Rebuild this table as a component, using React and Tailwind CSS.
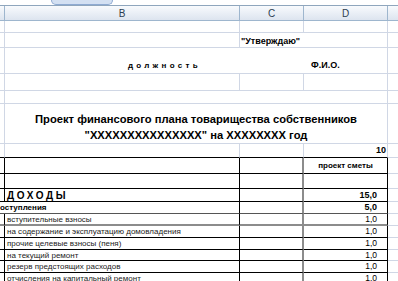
const font = { fontFamily: '"Liberation Sans", Arial, sans-serif' }

const rows = [
  { label: 'вступительные взносы', h: 'h-[12px]', line: 'border-b-2 border-b-[#8c8c8c]' },
  { label: 'на содержание и эксплуатацию домовладения', h: 'h-[12px]', line: 'border-b border-b-black' },
  { label: 'прочие целевые взносы (пеня)', h: 'h-[12px]', line: 'border-b border-b-black' },
  { label: 'на текущий ремонт', h: 'h-[11px]', line: 'border-b border-b-black' },
  { label: 'резерв предстоящих расходов', h: 'h-[12px]', line: 'border-b border-b-black' },
  { label: 'отчисления на капитальный ремонт', h: 'h-[12px]', line: 'border-b-2 border-b-[#8c8c8c]' },
]

function GridRow({ h, children }) {
  return <div className={`flex ${h}`}>{children}</div>
}

export default function App() {
  return (
    <div className="w-[398px] h-[281px] overflow-hidden bg-white text-black" style={font}>
      {/* strip above headers */}
      <div className="h-[5px] flex">
        <div className="ml-[51px] w-[62px] h-[5px] rounded-b-[6px] bg-[#d3e0f2] border border-t-0 border-[#8eaad2]" />
      </div>

      {/* column headers */}
      <div className="flex h-[16px] border-t border-[#8fa6bd] bg-gradient-to-b from-[#f8fafd] to-[#dbe3ee] text-[10px] text-[#2c3e50] leading-[15px]">
        <div className="w-[5px] shrink-0 border-r border-b border-[#9eb6ce]" />
        <div className="w-[235px] shrink-0 border-r border-b border-[#9eb6ce] text-center">B</div>
        <div className="w-[64px] shrink-0 border-r border-b border-[#9eb6ce] text-center">C</div>
        <div className="w-[84px] shrink-0 border-r border-b border-[#9eb6ce] text-center">D</div>
        <div className="flex-1 border-b border-[#9eb6ce]" />
      </div>

      {/* row 1 */}
      <GridRow h="h-[12px]">
        <div className="w-[5px] shrink-0 border-r border-b border-[#d0d7e5]" />
        <div className="w-[235px] shrink-0 border-r border-b border-[#d0d7e5]" />
        <div className="w-[64px] shrink-0 border-r border-b border-[#d0d7e5]" />
        <div className="w-[84px] shrink-0 border-r border-b border-[#d0d7e5]" />
        <div className="flex-1 border-b border-[#d0d7e5]" />
      </GridRow>

      {/* Утверждаю */}
      <GridRow h="h-[15px]">
        <div className="w-[5px] shrink-0 border-r border-b border-[#d0d7e5]" />
        <div className="w-[235px] shrink-0 border-r border-b border-[#d0d7e5]" />
        <div className="w-[148px] shrink-0 border-r border-b border-[#d0d7e5] pl-[1px] text-[9px] font-bold leading-[16px] whitespace-nowrap">
          "Утверждаю"
        </div>
        <div className="flex-1 border-b border-[#d0d7e5]" />
      </GridRow>

      {/* должность / ФИО */}
      <GridRow h="h-[26px]">
        <div className="w-[5px] shrink-0 border-r border-b border-[#d0d7e5]" />
        <div className="w-[235px] shrink-0 border-b border-[#d0d7e5] flex items-end justify-end pr-[39px] pb-[2px] text-[8px] font-bold tracking-[3.3px] leading-[10px] whitespace-nowrap">
          должность
        </div>
        <div className="w-[64px] shrink-0 border-b border-[#d0d7e5]" />
        <div className="w-[84px] shrink-0 border-r border-b border-[#d0d7e5] flex items-end pl-[7px] pb-[2px] text-[9px] font-bold leading-[11px]">
          Ф.И.О.
        </div>
        <div className="flex-1 border-b border-[#d0d7e5]" />
      </GridRow>

      <GridRow h="h-[17px]">
        <div className="w-[5px] shrink-0 border-r border-b border-[#d0d7e5]" />
        <div className="w-[235px] shrink-0 border-r border-b border-[#d0d7e5]" />
        <div className="w-[64px] shrink-0 border-r border-b border-[#d0d7e5]" />
        <div className="w-[84px] shrink-0 border-r border-b border-[#d0d7e5]" />
        <div className="flex-1 border-b border-[#d0d7e5]" />
      </GridRow>

      <GridRow h="h-[13px]">
        <div className="w-[5px] shrink-0 border-r border-b border-[#d0d7e5]" />
        <div className="w-[383px] shrink-0 border-r border-b border-[#d0d7e5]" />
        <div className="flex-1 border-b border-[#d0d7e5]" />
      </GridRow>

      {/* title */}
      <GridRow h="h-[40px]">
        <div className="w-[5px] shrink-0 border-r border-b border-[#d0d7e5]" />
        <div className="w-[383px] shrink-0 border-r border-b border-[#d0d7e5] flex flex-col items-center pt-[7px] text-[11.2px] font-bold leading-[16px] whitespace-nowrap">
          <span>Проект финансового плана товарищества собственников</span>
          <span>"XXXXXXXXXXXXXXX" на XXXXXXXX год</span>
        </div>
        <div className="flex-1 border-b border-[#d0d7e5]" />
      </GridRow>

      {/* 10 */}
      <GridRow h="h-[14px]">
        <div className="w-[5px] shrink-0 border-r border-b border-r-[#d0d7e5] border-b-black" />
        <div className="w-[235px] shrink-0 border-r border-b border-r-[#d0d7e5] border-b-black" />
        <div className="w-[64px] shrink-0 border-r border-b border-r-[#d0d7e5] border-b-black" />
        <div className="w-[84px] shrink-0 border-r border-b border-r-[#d0d7e5] border-b-black text-right pr-[1px] text-[9px] font-bold leading-[13px]">
          10
        </div>
        <div className="flex-1 border-b border-[#d0d7e5]" />
      </GridRow>

      {/* проект сметы */}
      <GridRow h="h-[16px]">
        <div className="w-[5px] shrink-0 border-r border-b border-black" />
        <div className="w-[235px] shrink-0 border-r border-b border-black" />
        <div className="w-[64px] shrink-0 border-r-2 border-b border-r-[#8c8c8c] border-b-black" />
        <div className="w-[84px] shrink-0 border-r border-b border-black text-center text-[8px] font-bold leading-[16px]">
          проект сметы
        </div>
        <div className="flex-1 border-b border-[#d0d7e5]" />
      </GridRow>

      <GridRow h="h-[15px]">
        <div className="w-[5px] shrink-0 border-r border-b border-black" />
        <div className="w-[235px] shrink-0 border-r border-b border-black" />
        <div className="w-[64px] shrink-0 border-r-2 border-b border-r-[#8c8c8c] border-b-black" />
        <div className="w-[84px] shrink-0 border-r border-b border-black" />
        <div className="flex-1 border-b border-[#d0d7e5]" />
      </GridRow>

      {/* ДОХОДЫ */}
      <GridRow h="h-[13px]">
        <div className="w-[5px] shrink-0 border-r border-b border-black" />
        <div className="w-[235px] shrink-0 border-r border-b border-black pl-[2px] text-[10px] font-bold tracking-[2.6px] leading-[13px]">
          ДОХОДЫ
        </div>
        <div className="w-[64px] shrink-0 border-r-2 border-b border-r-[#8c8c8c] border-b-black" />
        <div className="w-[84px] shrink-0 border-r border-b border-black text-right pr-[10px] text-[9px] font-bold leading-[13px]">
          15,0
        </div>
        <div className="flex-1 border-b border-[#d0d7e5]" />
      </GridRow>

      {/* Поступления */}
      <GridRow h="h-[12px]">
        <div className="w-[240px] shrink-0 border-r border-b border-r-black border-b-[#555] text-[8px] font-bold leading-[11px] whitespace-nowrap overflow-hidden">
          оступления
        </div>
        <div className="w-[64px] shrink-0 border-r-2 border-b border-r-[#8c8c8c] border-b-[#555]" />
        <div className="w-[84px] shrink-0 border-r border-b border-r-black border-b-[#555] text-right pr-[10px] text-[9px] font-bold leading-[11px]">
          5,0
        </div>
        <div className="flex-1 border-b border-[#d0d7e5]" />
      </GridRow>

      {rows.map((r, i) => (
        <GridRow key={i} h={r.h}>
          <div className={`w-[5px] shrink-0 border-r border-r-black ${r.line}`} />
          <div className={`w-[235px] shrink-0 border-r border-r-black pl-[2px] text-[8px] text-[#222] leading-[11px] whitespace-nowrap overflow-hidden ${r.line}`}>
            {r.label}
          </div>
          <div className={`w-[64px] shrink-0 border-r-2 border-r-[#8c8c8c] ${r.line}`} />
          <div className={`w-[84px] shrink-0 border-r border-r-black text-right pr-[10px] text-[8.5px] leading-[11px] ${r.line}`}>
            1,0
          </div>
          <div className="flex-1 border-b border-[#d0d7e5]" />
        </GridRow>
      ))}
    </div>
  )
}
